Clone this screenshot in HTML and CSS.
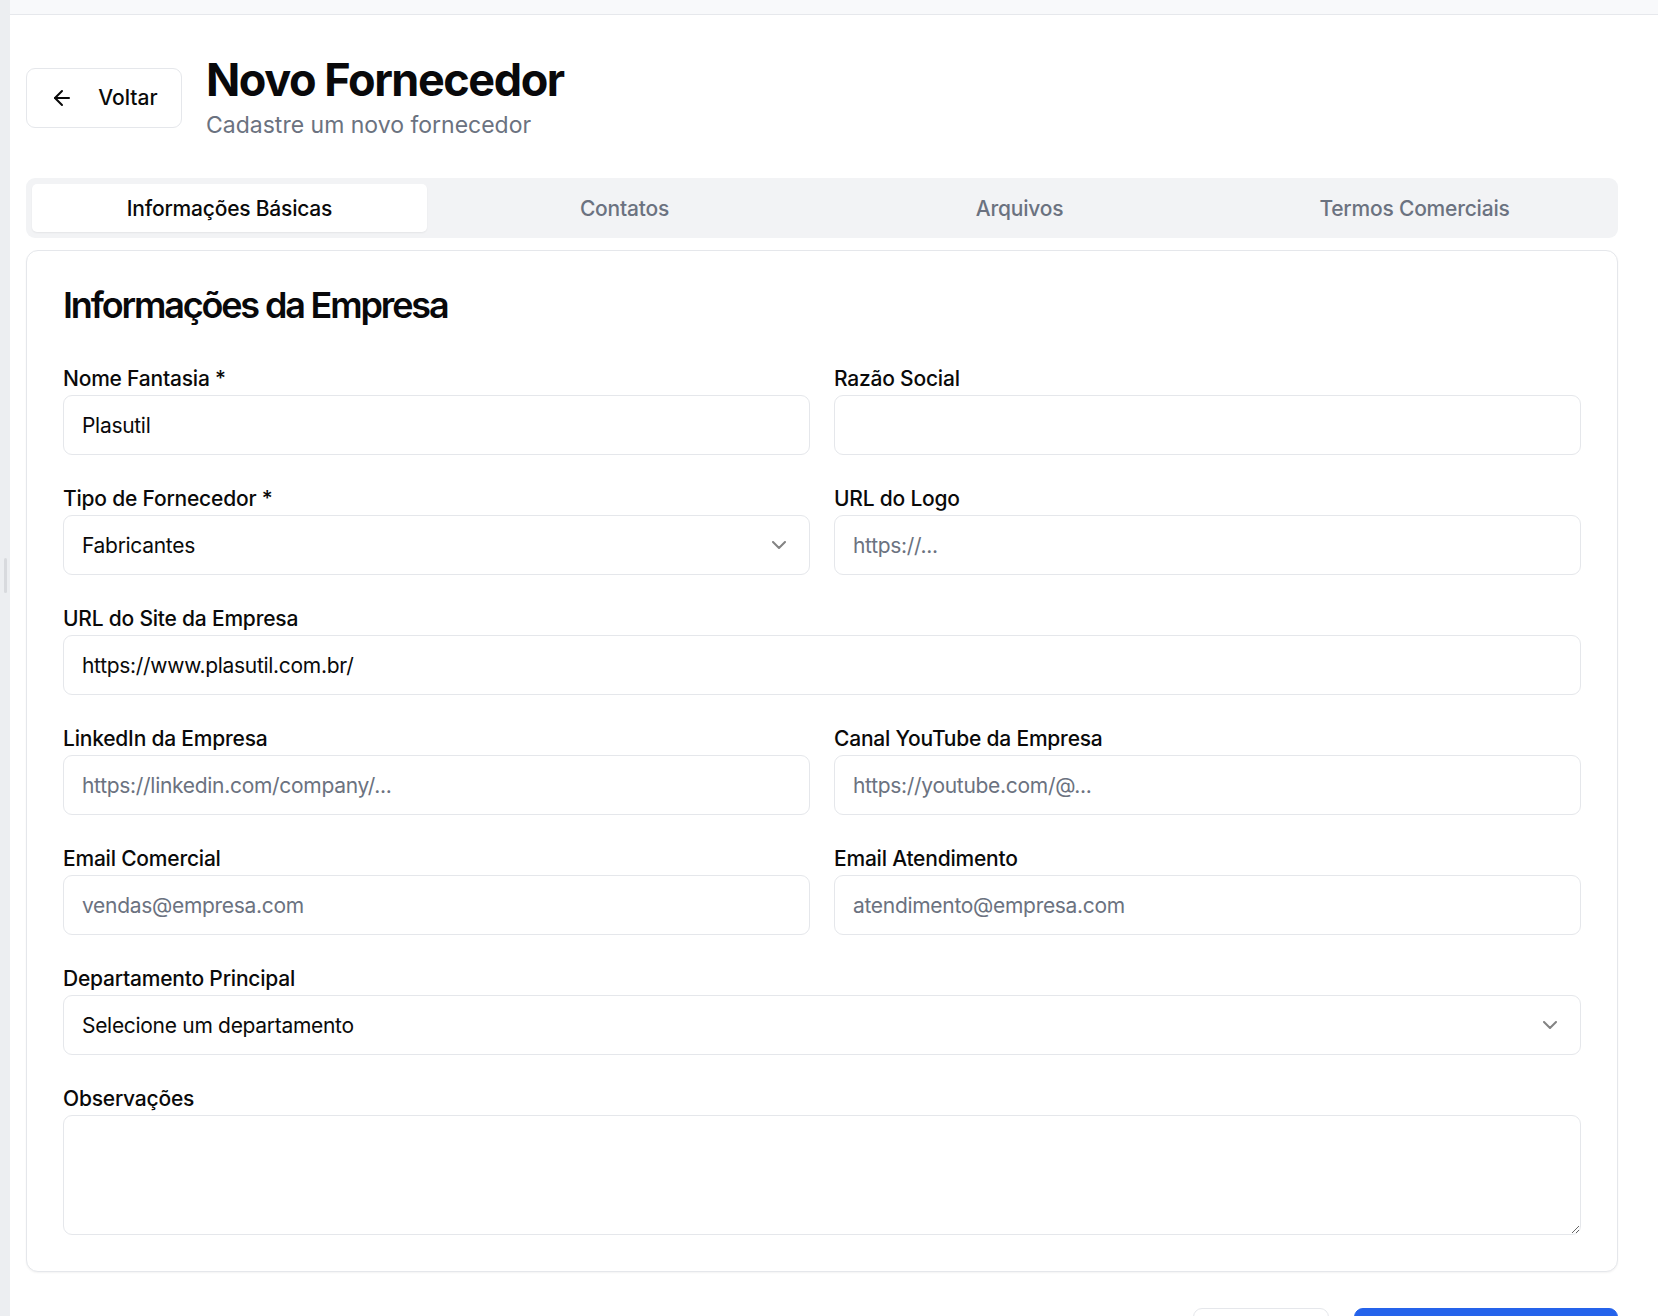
FILE: index.html
```html
<!DOCTYPE html>
<html lang="pt-BR">
<head>
<meta charset="utf-8">
<title>Novo Fornecedor</title>
<link rel="stylesheet" href="styles.css">
</head>
<body>
<div class="app">
  <aside class="rail"><span class="rail-handle"></span></aside>
  <div class="main">
    <div class="topbar"></div>
    <div class="page">
      <header class="page-header">
        <button class="btn btn-outline back-btn" type="button">
          <svg class="icon" viewBox="0 0 24 24" fill="none" stroke="currentColor" stroke-width="2" stroke-linecap="round" stroke-linejoin="round"><path d="m12 19-7-7 7-7"/><path d="M19 12H5"/></svg>
          <span>Voltar</span>
        </button>
        <div class="titles">
          <h1 class="page-title">Novo Fornecedor</h1>
          <p class="page-subtitle">Cadastre um novo fornecedor</p>
        </div>
      </header>

      <nav class="tabs">
        <div class="tab tab-active">Informações Básicas</div>
        <div class="tab">Contatos</div>
        <div class="tab">Arquivos</div>
        <div class="tab">Termos Comerciais</div>
      </nav>

      <section class="card">
        <h2 class="card-title">Informações da Empresa</h2>
        <div class="form-grid">
          <div class="field">
            <label class="label">Nome Fantasia *</label>
            <input class="input" type="text" value="Plasutil">
          </div>
          <div class="field">
            <label class="label">Razão Social</label>
            <input class="input" type="text" value="">
          </div>
          <div class="field">
            <label class="label">Tipo de Fornecedor *</label>
            <div class="input select">
              <span>Fabricantes</span>
              <svg class="chev" viewBox="0 0 24 24" fill="none" stroke="currentColor" stroke-width="2" stroke-linecap="round" stroke-linejoin="round"><path d="m6 9 6 6 6-6"/></svg>
            </div>
          </div>
          <div class="field">
            <label class="label">URL do Logo</label>
            <input class="input" type="text" placeholder="https://...">
          </div>
          <div class="field field-wide">
            <label class="label">URL do Site da Empresa</label>
            <input class="input" type="text" value="https://www.plasutil.com.br/">
          </div>
          <div class="field">
            <label class="label">LinkedIn da Empresa</label>
            <input class="input" type="text" placeholder="https://linkedin.com/company/...">
          </div>
          <div class="field">
            <label class="label">Canal YouTube da Empresa</label>
            <input class="input" type="text" placeholder="https://youtube.com/@...">
          </div>
          <div class="field">
            <label class="label">Email Comercial</label>
            <input class="input" type="text" placeholder="vendas@empresa.com">
          </div>
          <div class="field">
            <label class="label">Email Atendimento</label>
            <input class="input" type="text" placeholder="atendimento@empresa.com">
          </div>
          <div class="field field-wide">
            <label class="label">Departamento Principal</label>
            <div class="input select">
              <span>Selecione um departamento</span>
              <svg class="chev" viewBox="0 0 24 24" fill="none" stroke="currentColor" stroke-width="2" stroke-linecap="round" stroke-linejoin="round"><path d="m6 9 6 6 6-6"/></svg>
            </div>
          </div>
          <div class="field field-wide">
            <label class="label">Observações</label>
            <textarea class="input textarea"></textarea>
          </div>
        </div>
      </section>

      <div class="actions">
        <button class="btn btn-outline cancel-btn" type="button">Cancelar</button>
        <button class="btn btn-primary save-btn" type="button">
          <svg class="icon" viewBox="0 0 24 24" fill="none" stroke="currentColor" stroke-width="2" stroke-linecap="round" stroke-linejoin="round"><path d="M19 21H5a2 2 0 0 1-2-2V5a2 2 0 0 1 2-2h11l5 5v11a2 2 0 0 1-2 2z"/><path d="M17 21v-8H7v8"/><path d="M7 3v5h8"/></svg>
          <span>Criar Fornecedor</span>
        </button>
      </div>
    </div>
  </div>
</div>
</body>
</html>
```

FILE: styles.css
```css
* { box-sizing: border-box; }

html, body {
  margin: 0;
  padding: 0;
  height: 100%;
  overflow: hidden;
  background: #ffffff;
}

body {
  font-family: Inter, "Noto Sans", "Liberation Sans", sans-serif;
  color: #0a0a0a;
}

.app {
  display: flex;
  min-height: 100vh;
}

.rail {
  position: relative;
  flex: 0 0 10px;
  background: #eceef1;
}

.rail-handle {
  position: absolute;
  left: 4px;
  top: 558px;
  width: 3px;
  height: 35px;
  border-radius: 2px;
  background: #d8dade;
}

.main {
  flex: 1;
  min-width: 0;
}

.topbar {
  height: 15px;
  background: #f8f9fb;
  border-bottom: 1px solid #e6e8ec;
}

.page {
  padding: 40px 40px 40px 16px;
}

.page-header {
  display: flex;
  align-items: center;
  gap: 24px;
}

.btn {
  display: inline-flex;
  align-items: center;
  justify-content: center;
  height: 60px;
  padding: 0 24px;
  border-radius: 9px;
  font-family: inherit;
  font-size: 21px;
  font-weight: 500;
  cursor: pointer;
}

.btn-outline {
  background: #ffffff;
  border: 1px solid #e5e7eb;
  color: #0a0a0a;
}

.btn-primary {
  background: #2563eb;
  border: 1px solid #2563eb;
  color: #ffffff;
}

.icon {
  width: 24px;
  height: 24px;
  margin-right: 24px;
  flex: none;
}

.back-btn {
  width: 156px;
}

.titles {
  display: flex;
  flex-direction: column;
  gap: 5px;
}

.page-title {
  margin: 0;
  font-size: 45px;
  line-height: 50px;
  font-weight: 700;
  letter-spacing: -0.032em;
  color: #09090b;
}

.page-subtitle {
  margin: 0;
  font-size: 23px;
  line-height: 30px;
  color: #6b7280;
}

.tabs {
  margin-top: 38px;
  display: grid;
  grid-template-columns: repeat(4, 1fr);
  height: 60px;
  padding: 6px;
  background: #f2f3f5;
  border-radius: 9px;
}

.tab {
  display: flex;
  align-items: center;
  justify-content: center;
  border-radius: 5px;
  font-size: 21px;
  font-weight: 500;
  letter-spacing: -0.01em;
  color: #6b7280;
}

.tab-active {
  background: #ffffff;
  color: #0a0a0a;
  box-shadow: 0 1px 2px rgba(0, 0, 0, 0.06);
}

.card {
  margin-top: 12px;
  border: 1px solid #e5e7eb;
  border-radius: 12px;
  background: #ffffff;
  box-shadow: 0 1px 2px rgba(0, 0, 0, 0.05);
  padding: 36px;
}

.card-title {
  margin: 0;
  font-size: 36px;
  line-height: 36px;
  font-weight: 600;
  letter-spacing: -0.06em;
  color: #09090b;
}

.form-grid {
  margin-top: 40px;
  display: grid;
  grid-template-columns: 1fr 1fr;
  column-gap: 24px;
  row-gap: 28px;
}

.field {
  display: flex;
  flex-direction: column;
}

.field-wide {
  grid-column: 1 / -1;
}

.label {
  display: block;
  font-size: 21px;
  line-height: 30px;
  font-weight: 500;
  letter-spacing: -0.01em;
  color: #0a0a0a;
  padding-top: 1px;
  margin-bottom: 1px;
}

.input {
  width: 100%;
  height: 60px;
  padding: 0 18px;
  border: 1px solid #e5e7eb;
  border-radius: 9px;
  background: #ffffff;
  font-family: inherit;
  font-size: 21px;
  letter-spacing: -0.3px;
  color: #0a0a0a;
  outline: none;
}

.input::placeholder {
  color: #6b7280;
}

.select {
  display: flex;
  align-items: center;
  justify-content: space-between;
}

.chev {
  width: 24px;
  height: 24px;
  color: #0a0a0a;
  opacity: 0.5;
  flex: none;
}

.textarea {
  height: 120px;
  padding: 12px 18px;
  display: block;
  resize: both;
}

.actions {
  margin-top: 36px;
  display: flex;
  justify-content: flex-end;
  gap: 25px;
}

.cancel-btn {
  width: 136px;
}

.save-btn {
  width: 264px;
}

.save-btn .icon {
  margin-right: 12px;
}
```
